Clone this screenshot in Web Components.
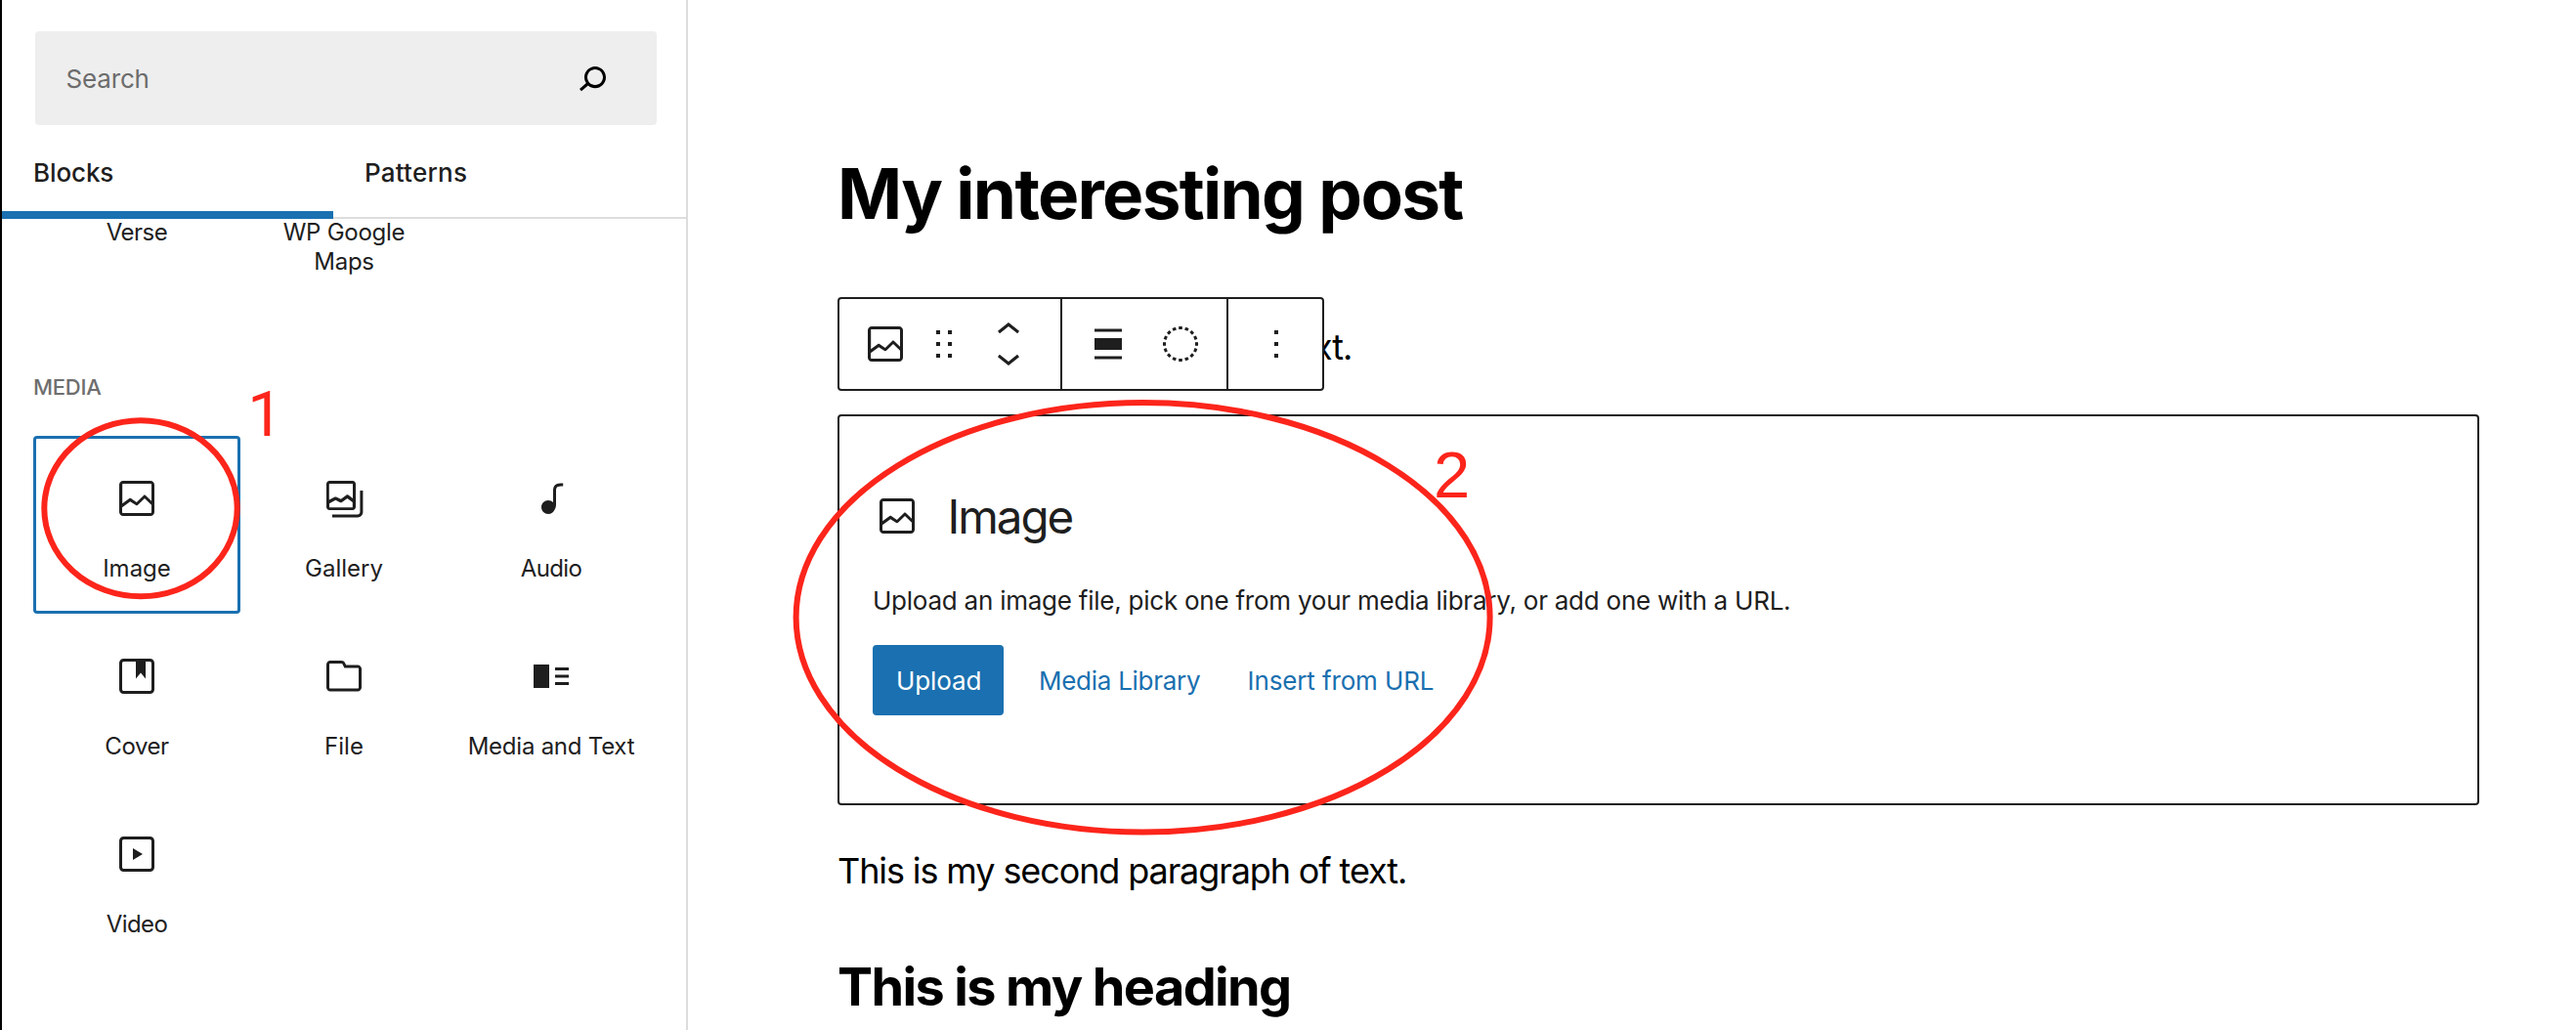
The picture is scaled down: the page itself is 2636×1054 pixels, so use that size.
<!DOCTYPE html>
<html lang="en">
<head>
<meta charset="utf-8">
<title>Block editor</title>
<style>
html,body{margin:0;height:100%;overflow:hidden;background:#fff}
body{font-family:Inter,"Liberation Sans",sans-serif;color:#1e1e1e}
</style>
</head>
<body>
<editor-app></editor-app>
<script>
const ICONS={
image:'<path d="M19 3H5c-1.1 0-2 .9-2 2v14c0 1.1.9 2 2 2h14c1.1 0 2-.9 2-2V5c0-1.1-.9-2-2-2zM5 4.5h14c.3 0 .5.2.5.5v8.4l-3-2.9c-.3-.3-.8-.3-1 0L11.9 14 9 12c-.3-.2-.6-.2-.8 0l-3.6 2.6V5c-.1-.3.1-.5.4-.5zm14 15H5c-.3 0-.5-.2-.5-.5v-2.4l4.1-3 3 1.9c.3.2.7.2.9-.1L16 12l3.5 3.4V19c0 .3-.2.5-.5.5z"/>',
gallery:'<path d="M20.2 8v11c0 .7-.6 1.2-1.2 1.2H6v1.5h13c1.5 0 2.7-1.2 2.7-2.8V8h-1.5zM18 16.4V4.6c0-.9-.7-1.6-1.6-1.6H4.6C3.7 3 3 3.7 3 4.6v11.8c0 .9.7 1.6 1.6 1.6h11.8c.9 0 1.6-.7 1.6-1.6zM4.5 4.6c0-.1.1-.1.1-.1h11.8c.1 0 .1.1.1.1V12l-2.3-1.7c-.3-.2-.6-.2-.9 0l-2.9 2.1L8 11.3c-.2-.1-.5-.1-.7 0l-2.9 1.5V4.6zm0 11.8v-1.8l3.2-1.7 2.4 1.2c.2.1.5.1.8-.1l2.8-2 2.7 2v2.5c0 .1-.1.1-.1.1H4.6c0-.1-.1-.2-.1-.2z"/>',
audio:'<path d="M17.7 4.3c-1.2 0-2.8 0-3.8 1-.6.6-.9 1.5-.9 2.6V14c-.6-.6-1.5-1-2.5-1C8.6 13 7 14.6 7 16.5S8.6 20 10.5 20c1.5 0 2.8-1 3.3-2.3.5-.8.7-1.8.7-2.5V7.9c0-.7.2-1.2.5-1.6.6-.6 1.8-.6 2.8-.6h.3V4.3h-.4z"/>',
cover:'<path d="M18.7 3H5.3C4 3 3 4 3 5.3v13.4C3 20 4 21 5.3 21h13.4c1.3 0 2.3-1 2.3-2.3V5.3C21 4 20 3 18.7 3zm.8 15.7c0 .4-.4.8-.8.8H5.3c-.4 0-.8-.4-.8-.8V5.3c0-.4.4-.8.8-.8h6.2v8.7l2.5-2.9 2.5 2.9V4.5h2.2c.4 0 .8.4.8.8v13.4z"/>',
file:'<path d="M19 6.2h-5.9l-.6-1.1c-.3-.7-1-1.1-1.8-1.1H5c-1.1 0-2 .9-2 2v11.8c0 1.1.9 2 2 2h14c1.1 0 2-.9 2-2V8.2c0-1.1-.9-2-2-2zm.5 11.6c0 .3-.2.5-.5.5H5c-.3 0-.5-.2-.5-.5V6c0-.3.2-.5.5-.5h5.8c.2 0 .4.1.4.3l1 2H19c.3 0 .5.2.5.5v9.5z"/>',
mediatext:'<path d="M3 18h8V6H3v12zM14 7.5V9h7V7.5h-7zm0 5.3h7v-1.5h-7v1.5zm0 3.7h7V15h-7v1.5z"/>',
video:'<path d="M18.7 3H5.3C4 3 3 4 3 5.3v13.4C3 20 4 21 5.3 21h13.4c1.3 0 2.3-1 2.3-2.3V5.3C21 4 20 3 18.7 3zm.8 15.7c0 .4-.4.8-.8.8H5.3c-.4 0-.8-.4-.8-.8V5.3c0-.4.4-.8.8-.8h13.4c.4 0 .8.4.8.8v13.4zM10 15l5-3-5-3v6z"/>',
search:'<path d="M13.5 6C10.5 6 8 8.5 8 11.5c0 1.1.3 2.1.9 3l-3.4 3 1 1.1 3.4-2.9c1 .9 2.2 1.4 3.6 1.4 3 0 5.5-2.5 5.5-5.5C19 8.5 16.5 6 13.5 6zm0 9.5c-2.2 0-4-1.8-4-4s1.8-4 4-4 4 1.8 4 4-1.8 4-4 4z"/>',
drag:'<path d="M8 7h2V5H8v2zm0 6h2v-2H8v2zm0 6h2v-2H8v2zm6-14v2h2V5h-2zm0 8h2v-2h-2v2zm0 6h2v-2h-2v2z"/>',
up:'<path d="M6.5 12.4L12 8l5.5 4.4-.9 1.2L12 10l-4.5 3.6-1-1.2z"/>',
down:'<path d="M17.5 11.6L12 16l-5.5-4.4.9-1.2L12 14l4.5-3.6 1 1.2z"/>',
align:'<path d="M5 15h14V9H5v6zm0 4.8h14v-1.5H5v1.5zM5 4.2v1.5h14V4.2H5z"/>',
more:'<path d="M13 19h-2v-2h2v2zm0-6h-2v-2h2v2zm0-6h-2V5h2v2z"/>',
duotone:Array.from({length:16},(_,i)=>`<rect x="11.1" y="3" width="1.8" height="1.5" transform="rotate(${i*22.5} 12 12)"/>`).join('')
};
const define=(name,css,html)=>customElements.define(name,class extends HTMLElement{
  constructor(){super();this.attachShadow({mode:'open'}).innerHTML=`<style>*{box-sizing:border-box}${css}</style>${typeof html==='function'?html(this):html}`}
});
define('wp-icon',':host{display:block;flex:none;width:48px;height:48px}svg{display:block;width:100%;height:100%;fill:currentColor}',
  el=>`<svg viewBox="${el.getAttribute('box')||'0 0 24 24'}">${ICONS[el.getAttribute('name')]}</svg>`);
define('search-field',':host{display:flex;align-items:center;justify-content:space-between;height:96px;margin:32px 30px 0 34px;padding:0 42px 0 31.5px;background:#eee;border-radius:4px;font-size:26px;letter-spacing:-.16px;color:#6c6c6c}wp-icon{color:#000}',
  '<slot></slot><wp-icon name="search"></wp-icon>');
define('inserter-tabs',`:host{display:flex;height:96px;border-bottom:2px solid #ddd;font-size:26px;font-weight:500}
  div{height:96px;line-height:97px;padding-left:32px}.a{width:339px;border-bottom:8px solid #1a70b0;letter-spacing:-.1px}.b{flex:1;letter-spacing:.22px}`,
  '<div class="a">Blocks</div><div class="b">Patterns</div>');
define('block-grid',':host{display:grid;grid-template-columns:repeat(3,212px);margin-left:32px}','<slot></slot>');
define('block-tile',`:host{display:flex;flex-direction:column;align-items:center;height:182px;padding:40px 16px 0;font-size:24px;line-height:30px;text-align:center;border-radius:4px}
  :host([active]){box-shadow:inset 0 0 0 3px #1a70b0}
  :host([label-only]){height:auto;padding-top:0}
  span{margin-top:33px}:host([label-only]) span{margin-top:0}`,
  el=>(el.hasAttribute('icon')?`<wp-icon name="${el.getAttribute('icon')}"></wp-icon>`:'')+'<span><slot></slot></span>');
define('block-inserter',`:host{display:flex;flex-direction:column;flex:none;width:704px;height:1054px;border-left:2px solid #000;border-right:2px solid #ddd;overflow:hidden}
  .first{margin-top:-1px}
  h2{margin:98px 0 0 32px;height:30px;line-height:30px;font-size:22px;font-weight:500;letter-spacing:-.25px;color:#6e6e6e}
  .media{margin-top:35px}`,
  `<search-field>Search</search-field><inserter-tabs></inserter-tabs>
  <block-grid class="first"><block-tile label-only style="letter-spacing:-.5px">Verse</block-tile><block-tile label-only style="letter-spacing:-.25px">WP Google Maps</block-tile></block-grid>
  <h2>MEDIA</h2>
  <block-grid class="media">
    <block-tile icon="image" active>Image</block-tile>
    <block-tile icon="gallery">Gallery</block-tile>
    <block-tile icon="audio" style="letter-spacing:-.6px">Audio</block-tile>
    <block-tile icon="cover" style="letter-spacing:-.44px">Cover</block-tile>
    <block-tile icon="file">File</block-tile>
    <block-tile icon="mediatext" style="letter-spacing:-.24px">Media and Text</block-tile>
    <block-tile icon="video" style="letter-spacing:-.6px">Video</block-tile>
  </block-grid>`);
define('block-toolbar',`:host{display:flex;position:relative;z-index:1;flex:none;width:498px;height:96px;border:2px solid #1e1e1e;border-radius:4px;background:#fff}
  div{display:flex;align-items:center}
  .g1{width:228px;padding-left:23px;border-right:2px solid #1e1e1e}
  .g2{width:170px;padding-left:23px;gap:26px;border-right:2px solid #1e1e1e}
  .g3{padding-left:25px}
  .drag{margin:0 18px 0 12px}
  .move{flex-direction:column}.move wp-icon{height:28px}`,
  `<div class="g1"><wp-icon name="image"></wp-icon><wp-icon class="drag" name="drag"></wp-icon><div class="move"><wp-icon name="up" box="0 5 24 14"></wp-icon><wp-icon name="down" box="0 5 24 14"></wp-icon></div></div>
  <div class="g2"><wp-icon name="align"></wp-icon><wp-icon name="duotone"></wp-icon></div>
  <div class="g3"><wp-icon name="more"></wp-icon></div>`);
define('image-placeholder',`:host{display:block;width:1680px;height:400px;margin-top:24px;padding:73px 34px 0;border:2px solid #1e1e1e;border-radius:4px;font-size:26px}
  .title{display:flex;align-items:center;height:58px;gap:27.5px;padding-left:1px;font-size:47.5px;letter-spacing:-2.05px}
  p{margin:40px 0 0;height:36px;line-height:36px;letter-spacing:-.238px;white-space:nowrap}
  .row{display:flex;margin-top:27px;height:72px;line-height:73px;color:#1a70b0;white-space:nowrap}
  .up{width:134px;padding-left:24px;background:#1a70b0;color:#fff;border-radius:4px;letter-spacing:-.08px}
  .lib{width:213.6px;margin-left:36px;letter-spacing:-.27px}.url{letter-spacing:-.13px}`,
  `<div class="title"><wp-icon name="image"></wp-icon><span>Image</span></div>
  <p>Upload an image file, pick one from your media library, or add one with a URL.</p>
  <div class="row"><span class="up">Upload</span><span class="lib">Media Library</span><span class="url">Insert from URL</span></div>`);
define('post-canvas',`:host{display:block;flex:1;padding:155px 0 0 153px;color:#000}
  h1,h2,p{margin:0;white-space:nowrap}
  h1{height:86px;line-height:86px;font-size:71px;font-weight:700;letter-spacing:-1.7px}
  .bar{display:flex;margin-top:63px;height:96px}
  .bar p{margin-left:-11px;line-height:102px}
  p{font-size:36px;letter-spacing:-1.106px}
  .second{margin-top:42px;height:50px;line-height:50px}
  h2{margin-top:63px;height:60px;line-height:61px;font-size:54px;font-weight:700;letter-spacing:-1.618px}
  image-placeholder{color:#1e1e1e}block-toolbar{color:#1e1e1e}`,
  `<h1>My interesting post</h1>
  <div class="bar"><block-toolbar></block-toolbar><p>xt.</p></div>
  <image-placeholder></image-placeholder>
  <p class="second">This is my second paragraph of text.</p>
  <h2>This is my heading</h2>`);
define('callout-layer',':host{position:absolute;left:0;top:0;width:2636px;height:1054px;z-index:2;pointer-events:none}svg{display:block}',
  `<svg width="2636" height="1054" viewBox="0 0 2636 1054"><g fill="none" stroke="#fc251b" stroke-width="6">
  <ellipse cx="144" cy="520.3" rx="98.7" ry="90"/><ellipse cx="1169.6" cy="631.8" rx="355" ry="219.7"/></g>
  <g fill="#fc251b"><text x="253.3" y="446" font-family="Roboto, sans-serif" font-size="64.5">1</text>
  <text x="1467" y="509" font-family="Liberation Sans, sans-serif" font-size="67">2</text></g></svg>`);
define('editor-app',':host{display:flex;position:relative;width:2636px;height:1054px;overflow:hidden;background:#fff}',
  '<block-inserter></block-inserter><post-canvas></post-canvas><callout-layer></callout-layer>');
</script>
</body>
</html>
